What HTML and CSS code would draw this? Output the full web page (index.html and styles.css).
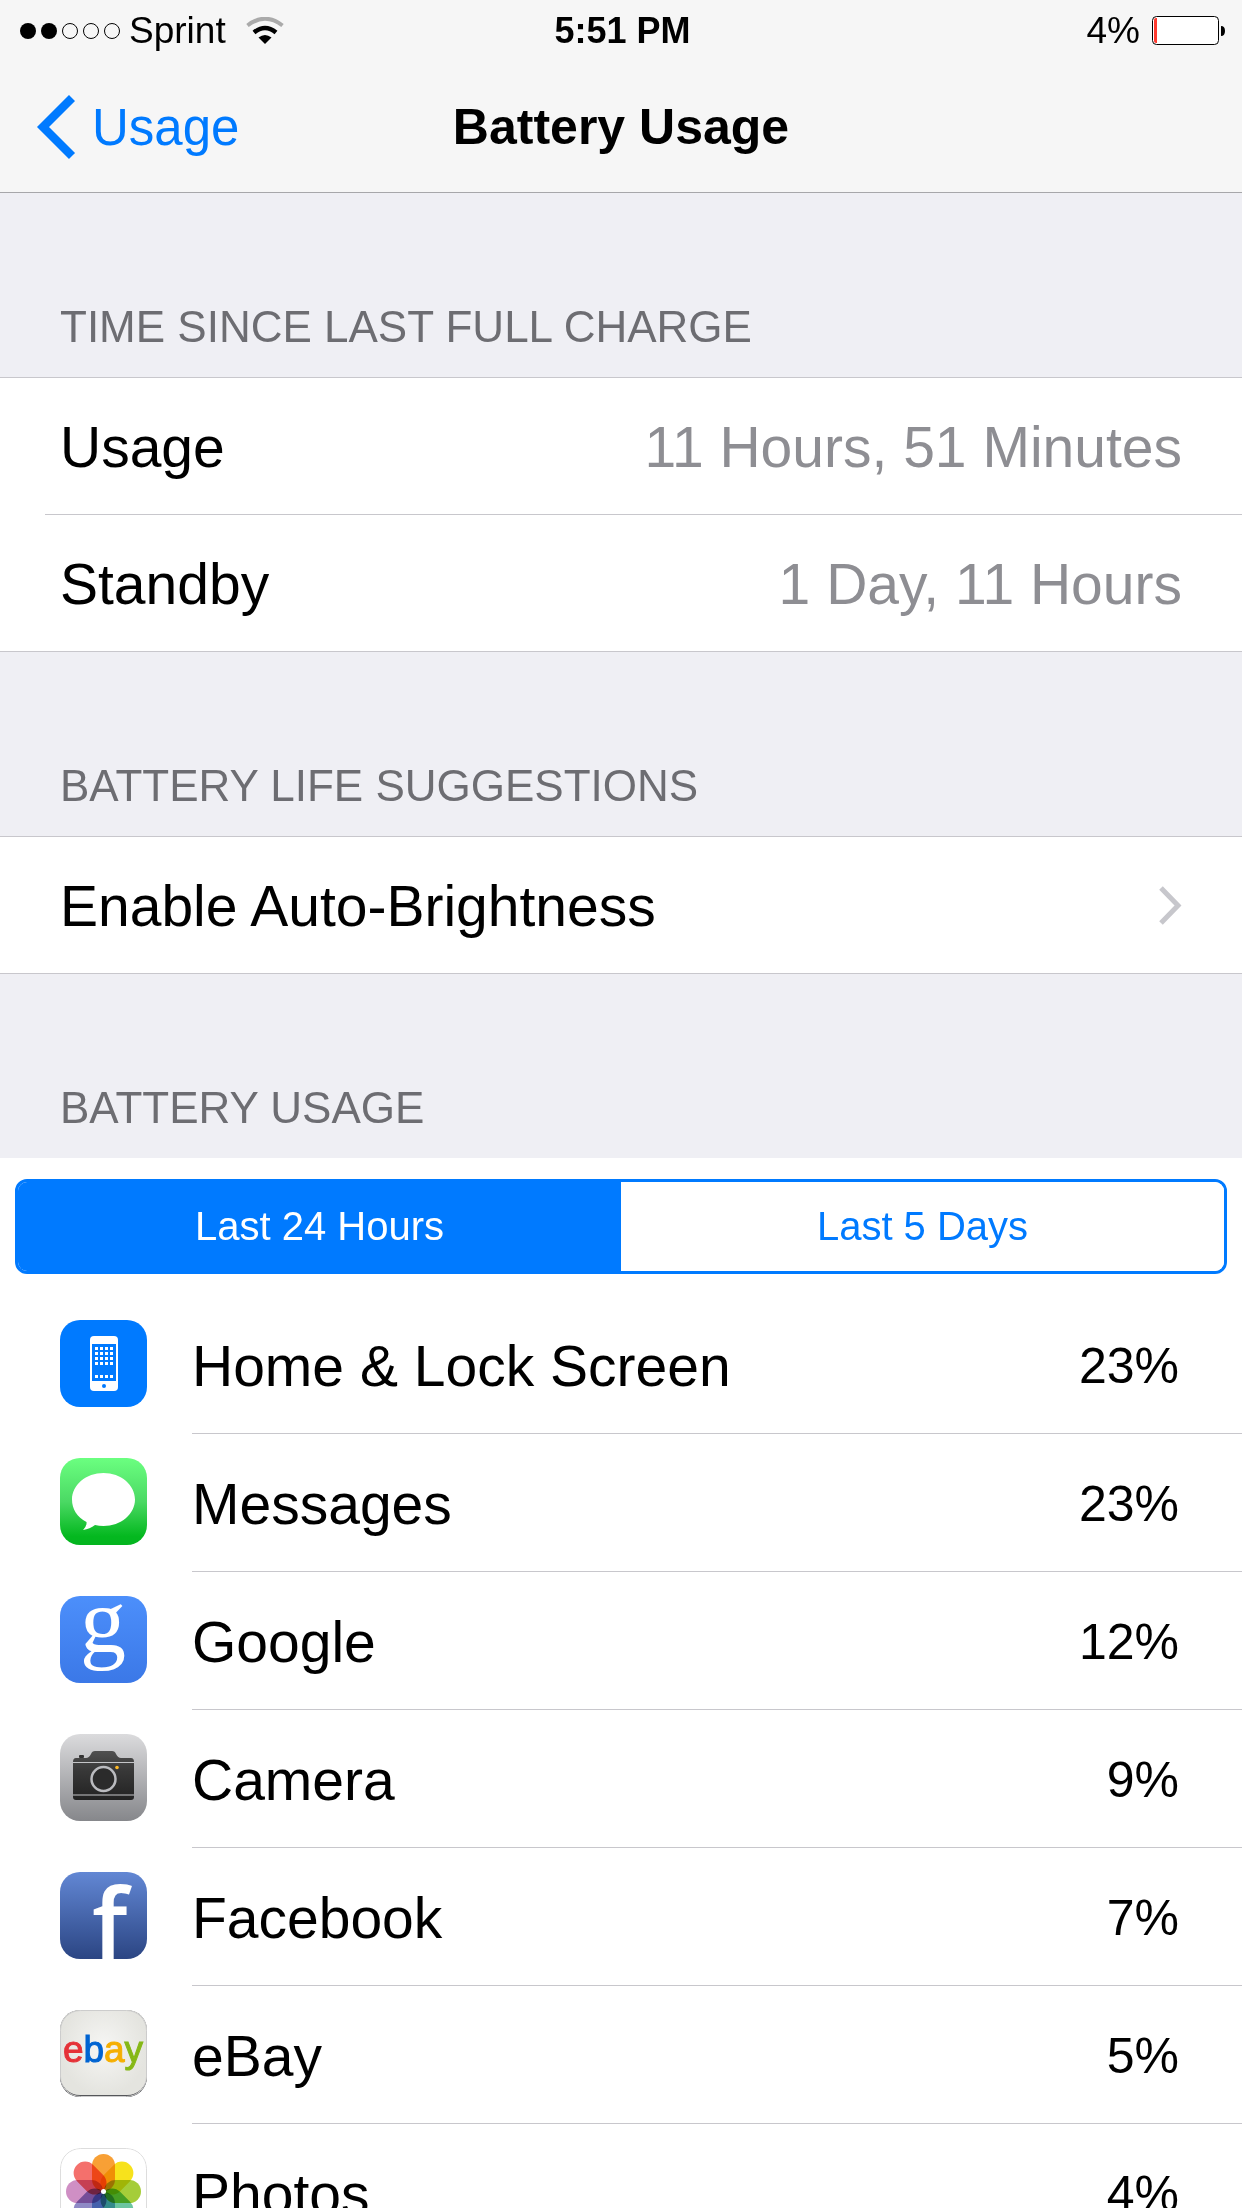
FILE: index.html
```
<!DOCTYPE html>
<html lang="en">

<head>
    <meta charset="UTF-8">
    <meta name="viewport" content="width=device-width, initial-scale=1.0">
    <title>Battery Usage</title>
    <link rel="stylesheet" href="styles.css">
</head>

<body>
    <div class="screen">
        <header class="top">
            <div class="status">
                <div class="status-left">
                    <svg class="signal" width="102" height="18" viewBox="0 0 102 18">
                        <circle cx="9" cy="9" r="8" />
                        <circle cx="30" cy="9" r="8" />
                        <g fill="none" stroke="#000">
                            <circle cx="51" cy="9" r="7.5" />
                            <circle cx="72" cy="9" r="7.5" />
                            <circle cx="93" cy="9" r="7.5" />
                        </g>
                    </svg>
                    <span class="carrier">Sprint</span>
                    <svg class="wifi" width="38" height="28" viewBox="0 0 38 28">
                        <path d="M1.500 8.500Q19 -5 36.500 8.500" fill="none" stroke="#aaa" stroke-width="4" />
                        <path d="M8 15.500Q19 6.500 30 15.500" fill="none" stroke="#000" stroke-width="4.500" />
                        <path d="M12.500 20.500Q19 15.500 25.500 20.500L19 27Z" />
                    </svg>
                </div>
                <div class="time">5:51 PM</div>
                <div class="status-right">
                    <span>4%</span>
                    <svg class="battery" width="74" height="30" viewBox="0 0 74 30">
                        <rect x="0.500" y="0.500" width="66" height="28" rx="4" fill="#fff" stroke="#000" />
                        <path d="M5 2V27H4Q2 27 2 25V4Q2 2 4 2Z" fill="#ff3b30" />
                        <path d="M69 10Q73 10 73 15Q73 20 69 20Z" />
                    </svg>
                </div>
            </div>
            <nav class="navbar">
                <a class="back" href="#">
                    <svg width="40" height="64" viewBox="0 0 40 64">
                        <path d="M36 3L7 32L36 61" fill="none" stroke="#007aff" stroke-width="8.500" />
                    </svg>
                    <span>Usage</span>
                </a>
                <h1>Battery Usage</h1>
            </nav>
        </header>

        <main class="content">
            <h2>TIME SINCE LAST FULL CHARGE</h2>
            <dl class="group">
                <div class="row">
                    <dt>Usage</dt>
                    <dd>11 Hours, 51 Minutes</dd>
                </div>
                <div class="row">
                    <dt>Standby</dt>
                    <dd>1 Day, 11 Hours</dd>
                </div>
            </dl>

            <h2>BATTERY LIFE SUGGESTIONS</h2>
            <div class="group">
                <a class="row" href="#">
                    <span>Enable Auto-Brightness</span>
                    <svg width="24" height="40" viewBox="0 0 24 40">
                        <path d="M3 2L20 19.500L3 37" fill="none" stroke="#c7c7cc" stroke-width="5" />
                    </svg>
                </a>
            </div>

            <h2>BATTERY USAGE</h2>
            <section class="usage">
                <div class="segmented">
                    <button type="button" class="active">Last 24 Hours</button>
                    <button type="button">Last 5 Days</button>
                </div>
                <ul class="apps">
                    <li>
                        <svg class="icon" viewBox="0 0 87 87">
                            <rect width="87" height="87" fill="#007aff" />
                            <rect x="30" y="16" width="28" height="55" rx="4" fill="#fff" />
                            <rect x="32" y="24" width="24" height="37" fill="#007aff" />
                            <circle cx="44" cy="66" r="2" fill="#007aff" />
                            <!-- app grid and dock -->
                            <path d="M35 28.500H54M35 33.500H54M35 38.500H54M35 43.500H54M35 56.500H54" stroke="#fff" stroke-width="3" stroke-dasharray="3 2" />
                        </svg>
                        <div class="app">
                            <span class="name">Home &amp; Lock Screen</span>
                            <span class="percent">23%</span>
                        </div>
                    </li>
                    <li>
                        <svg class="icon" viewBox="0 0 87 87">
                            <defs>
                                <linearGradient id="green" x2="0" y2="1">
                                    <stop offset="0" stop-color="#6bff80" />
                                    <stop offset="0.500" stop-color="#4bd964" />
                                    <stop offset="0.900" stop-color="#04b81f" />
                                    <stop offset="1" stop-color="#04b41f" />
                                </linearGradient>
                            </defs>
                            <rect width="87" height="87" fill="url(#green)" />
                            <path d="M43.500 15C61 15 75 27 75 41.500S61 68 43.500 68Q39 68 35 67Q30 71 23 72Q27 68 26.500 64C17 59 12 51 12 41.500C12 27 26 15 43.500 15Z" fill="#fff" />
                        </svg>
                        <div class="app">
                            <span class="name">Messages</span>
                            <span class="percent">23%</span>
                        </div>
                    </li>
                    <li>
                        <svg class="icon" viewBox="0 0 87 87">
                            <defs>
                                <linearGradient id="blue" x2="0" y2="1">
                                    <stop offset="0" stop-color="#4c8ffb" />
                                    <stop offset="1" stop-color="#3b78e7" />
                                </linearGradient>
                            </defs>
                            <rect width="87" height="87" fill="url(#blue)" />
                            <text class="google-g" x="43" y="56" text-anchor="middle">g</text>
                        </svg>
                        <div class="app">
                            <span class="name">Google</span>
                            <span class="percent">12%</span>
                        </div>
                    </li>
                    <li>
                        <svg class="icon" viewBox="0 0 87 87">
                            <defs>
                                <linearGradient id="silver" x2="0" y2="1">
                                    <stop offset="0" stop-color="#dbdbdd" />
                                    <stop offset="1" stop-color="#86878b" />
                                </linearGradient>
                                <linearGradient id="body" x2="0" y2="1">
                                    <stop offset="0" stop-color="#505050" />
                                    <stop offset="0.400" stop-color="#383838" />
                                    <stop offset="1" stop-color="#222" />
                                </linearGradient>
                            </defs>
                            <rect width="87" height="87" fill="url(#silver)" />
                            <rect x="19" y="21" width="5" height="3" rx="1" fill="#333" />
                            <path d="M13 28Q13 24 16 24H26Q29 24 31 20Q32 17 35 17H52Q55 17 56 20Q58 24 61 24H71Q74 24 74 28V63Q74 66 71 66H16Q13 66 13 63Z" fill="url(#body)" />
                            <path d="M13 28.500H74M13 61H74" stroke="#c4c5c8" stroke-width="1" />
                            <circle cx="43.500" cy="45" r="12" fill="#2b2b2b" stroke="#babbbf" stroke-width="2.500" />
                            <circle cx="57" cy="33.500" r="1.800" fill="#fdb827" />
                        </svg>
                        <div class="app">
                            <span class="name">Camera</span>
                            <span class="percent">9%</span>
                        </div>
                    </li>
                    <li>
                        <svg class="icon" viewBox="0 0 87 87">
                            <defs>
                                <linearGradient id="navy" x2="0" y2="1">
                                    <stop offset="0" stop-color="#6287d4" />
                                    <stop offset="1" stop-color="#2b4583" />
                                </linearGradient>
                            </defs>
                            <rect width="87" height="87" fill="url(#navy)" />
                            <text class="facebook-f" x="32" y="87">f</text>
                        </svg>
                        <div class="app">
                            <span class="name">Facebook</span>
                            <span class="percent">7%</span>
                        </div>
                    </li>
                    <li>
                        <svg class="icon" viewBox="0 0 87 87">
                            <defs>
                                <radialGradient id="paper">
                                    <stop offset="0" stop-color="#f6f6f4" />
                                    <stop offset="1" stop-color="#e4e4df" />
                                </radialGradient>
                            </defs>
                            <rect width="87" height="87" fill="#55565a" />
                            <rect y="-10" width="87" height="95" rx="20" fill="url(#paper)" />
                            <rect x="0.500" y="0.500" width="86" height="86" rx="20" fill="none" stroke="#ccc" />
                            <text class="ebay" x="43" y="52" text-anchor="middle"><tspan fill="#e53238" stroke="#e53238">e</tspan><tspan fill="#0064d2" stroke="#0064d2">b</tspan><tspan fill="#f5af02" stroke="#f5af02">a</tspan><tspan fill="#86b817" stroke="#86b817">y</tspan></text>
                        </svg>
                        <div class="app">
                            <span class="name">eBay</span>
                            <span class="percent">5%</span>
                        </div>
                    </li>
                    <li>
                        <svg class="icon" viewBox="0 0 87 87">
                            <rect x="0.500" y="0.500" width="86" height="86" rx="20" fill="#fff" stroke="#ddd" />
                            <g class="petals">
                                <rect x="32" y="6" width="23" height="37" rx="11.500" fill="#f8a035" />
                                <rect x="32" y="6" width="23" height="37" rx="11.500" fill="#f7e21c" transform="rotate(45 43.500 43.500)" />
                                <rect x="32" y="6" width="23" height="37" rx="11.500" fill="#a5cd39" transform="rotate(90 43.500 43.500)" />
                                <rect x="32" y="6" width="23" height="37" rx="11.500" fill="#6cc5a0" transform="rotate(135 43.500 43.500)" />
                                <rect x="32" y="6" width="23" height="37" rx="11.500" fill="#7ab3de" transform="rotate(180 43.500 43.500)" />
                                <rect x="32" y="6" width="23" height="37" rx="11.500" fill="#8f8ac6" transform="rotate(225 43.500 43.500)" />
                                <rect x="32" y="6" width="23" height="37" rx="11.500" fill="#cf8fc4" transform="rotate(270 43.500 43.500)" />
                                <rect x="32" y="6" width="23" height="37" rx="11.500" fill="#f4706c" transform="rotate(315 43.500 43.500)" />
                            </g>
                            <circle cx="43.500" cy="43.500" r="2.500" fill="#fff" />
                        </svg>
                        <div class="app">
                            <span class="name">Photos</span>
                            <span class="percent">4%</span>
                        </div>
                    </li>
                </ul>
            </section>
        </main>
    </div>
</body>

</html>
```
FILE: styles.css
```
* {
    margin: 0;
    padding: 0;
    box-sizing: border-box;
}

body {
    font-family: "Liberation Sans", Helvetica, Arial, sans-serif;
    color: #000;
    background-color: #efeff4;
}

a {
    color: inherit;
    text-decoration: none;
}

svg {
    display: block;
    flex: none;
}

.screen {
    display: flex;
    flex-direction: column;
    height: 100vh;
}

/* status bar + nav bar */
.top {
    background-color: #f6f6f6;
    border-bottom: 1px solid #a7a7aa;
}

.status {
    display: grid;
    grid-template-columns: 1fr auto 1fr;
    align-items: center;
    height: 60px;
    padding: 2px 16px 0 19px;
    font-size: 37px;
}

.status-left,
.status-right {
    display: flex;
    align-items: center;
}

.status-right {
    justify-content: flex-end;
    gap: 12px;
}

.carrier {
    margin: 0 20px 0 8px;
}

.time {
    font-size: 36px;
    font-weight: bold;
}

.navbar {
    display: grid;
    grid-template-columns: 1fr auto 1fr;
    align-items: center;
    height: 132px;
    padding: 2px 36px 0;
}

.back {
    display: flex;
    align-items: center;
    gap: 16px;
    color: #007aff;
    font-size: 51px;
}

.navbar h1 {
    font-size: 50px;
}

.content {
    flex: 1;
    overflow-y: auto;
    scrollbar-width: none;
}

.content h2 {
    padding: 108px 60px 24px;
    color: #6d6d72;
    font-size: 44px;
    font-weight: normal;
    line-height: 52px;
}

.group {
    background-color: #fff;
    border-top: 1px solid #c8c7cc;
    border-bottom: 1px solid #c8c7cc;
}

.row {
    display: flex;
    align-items: center;
    justify-content: space-between;
    height: 136px;
    padding: 2px 60px 0 15px;
    margin-left: 45px;
    font-size: 57px;
}

.row + .row {
    height: 137px;
    border-top: 1px solid #c8c7cc;
}

.row dd {
    color: #8e8e93;
}

.usage {
    padding-top: 21px;
    background-color: #fff;
}

.segmented {
    display: flex;
    height: 95px;
    margin: 0 15px 22px;
    overflow: hidden;
    border: 3px solid #007aff;
    border-radius: 12px;
}

.segmented button {
    flex: 1;
    border: 0;
    background-color: #fff;
    color: #007aff;
    font-family: inherit;
    font-size: 40px;
}

.segmented .active {
    background-color: #007aff;
    color: #fff;
}

.apps {
    list-style: none;
}

.apps li {
    display: flex;
    gap: 45px;
    height: 138px;
    padding-left: 60px;
}

.icon {
    width: 87px;
    height: 87px;
    margin-top: 24px;
    border-radius: 20px;
}

.app {
    display: flex;
    flex: 1;
    align-items: center;
    justify-content: space-between;
    padding: 2px 63px 0 0;
    border-bottom: 1px solid #c8c7cc;
}

.name {
    font-size: 57px;
}

.percent {
    font-size: 50px;
}

.google-g {
    fill: #fff;
    font-family: "Liberation Serif", serif;
    font-size: 92px;
}

.facebook-f {
    fill: #fff;
    font-family: "Open Sans", "Noto Sans", sans-serif;
    font-size: 98px;
    font-weight: 600;
}

.ebay {
    font-size: 37px;
}

.petals rect {
    mix-blend-mode: multiply;
}
```
